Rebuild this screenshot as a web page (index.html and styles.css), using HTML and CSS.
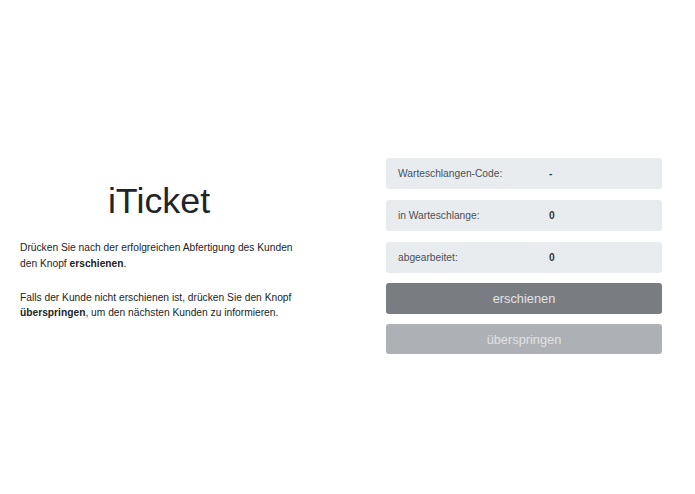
FILE: index.html
```html
<!DOCTYPE html>
<html lang="de">

<head>
    <meta charset="UTF-8">
    <meta name="viewport" content="width=device-width, initial-scale=1.0">
    <title>iTicket</title>
    <link rel="stylesheet" href="styles.css">
</head>

<body>
    <main class="page">
        <section class="intro">
            <h1 class="title">iTicket</h1>
            <p>Drücken Sie nach der erfolgreichen Abfertigung des Kunden den Knopf <strong>erschienen</strong>.</p>
            <p>Falls der Kunde nicht erschienen ist, drücken Sie den Knopf <strong>überspringen</strong>, um den nächsten Kunden zu informieren.</p>
        </section>

        <section class="panel">
            <div class="stat">
                <span class="stat-label">Warteschlangen-Code:</span>
                <span class="stat-value" id="queue-code">-</span>
            </div>
            <div class="stat">
                <span class="stat-label">in Warteschlange:</span>
                <span class="stat-value" id="waiting">0</span>
            </div>
            <div class="stat">
                <span class="stat-label">abgearbeitet:</span>
                <span class="stat-value" id="done">0</span>
            </div>
            <button class="btn btn-appeared">erschienen</button>
            <button class="btn btn-skip" disabled>überspringen</button>
        </section>
    </main>
</body>

</html>
```

FILE: styles.css
```css
body {
    font-family: 'Liberation Sans', Arial, sans-serif;
    background-color: #fff;
    color: #212529;
    margin: 0;
    padding: 0;
}

.page {
    display: flex;
    align-items: flex-start;
    padding: 158px 0 0 20px;
}

.intro {
    width: 278px;
    padding-top: 22px;
}

.title {
    font-size: 35.84px;
    font-weight: 300;
    line-height: 43px;
    text-align: center;
    margin: 0 0 17px;
}

.intro p {
    font-size: 10.24px;
    line-height: 15.5px;
    margin: 0 0 18.5px;
}

.panel {
    width: 276px;
    margin-left: 88px;
}

.stat {
    display: grid;
    grid-template-columns: 151px 1fr;
    align-items: center;
    height: 31px;
    padding: 0 12px;
    margin-bottom: 11px;
    background-color: #e9ecef;
    border-radius: 3px;
    font-size: 10.24px;
    color: #495057;
}

.stat-value {
    font-weight: bold;
    color: #343a40;
}

.btn {
    display: block;
    width: 100%;
    height: 31px;
    border: none;
    border-radius: 3px;
    font-family: 'Liberation Sans', Arial, sans-serif;
    font-size: 12.8px;
    cursor: pointer;
    outline: none;
}

.btn-appeared {
    margin-top: -1px;
    background-color: #797c81;
    color: #e2e3e4;
}

.btn-skip {
    margin-top: 10px;
    height: 30px;
    background-color: #adb1b5;
    color: #e0e2e4;
    cursor: default;
}
```
